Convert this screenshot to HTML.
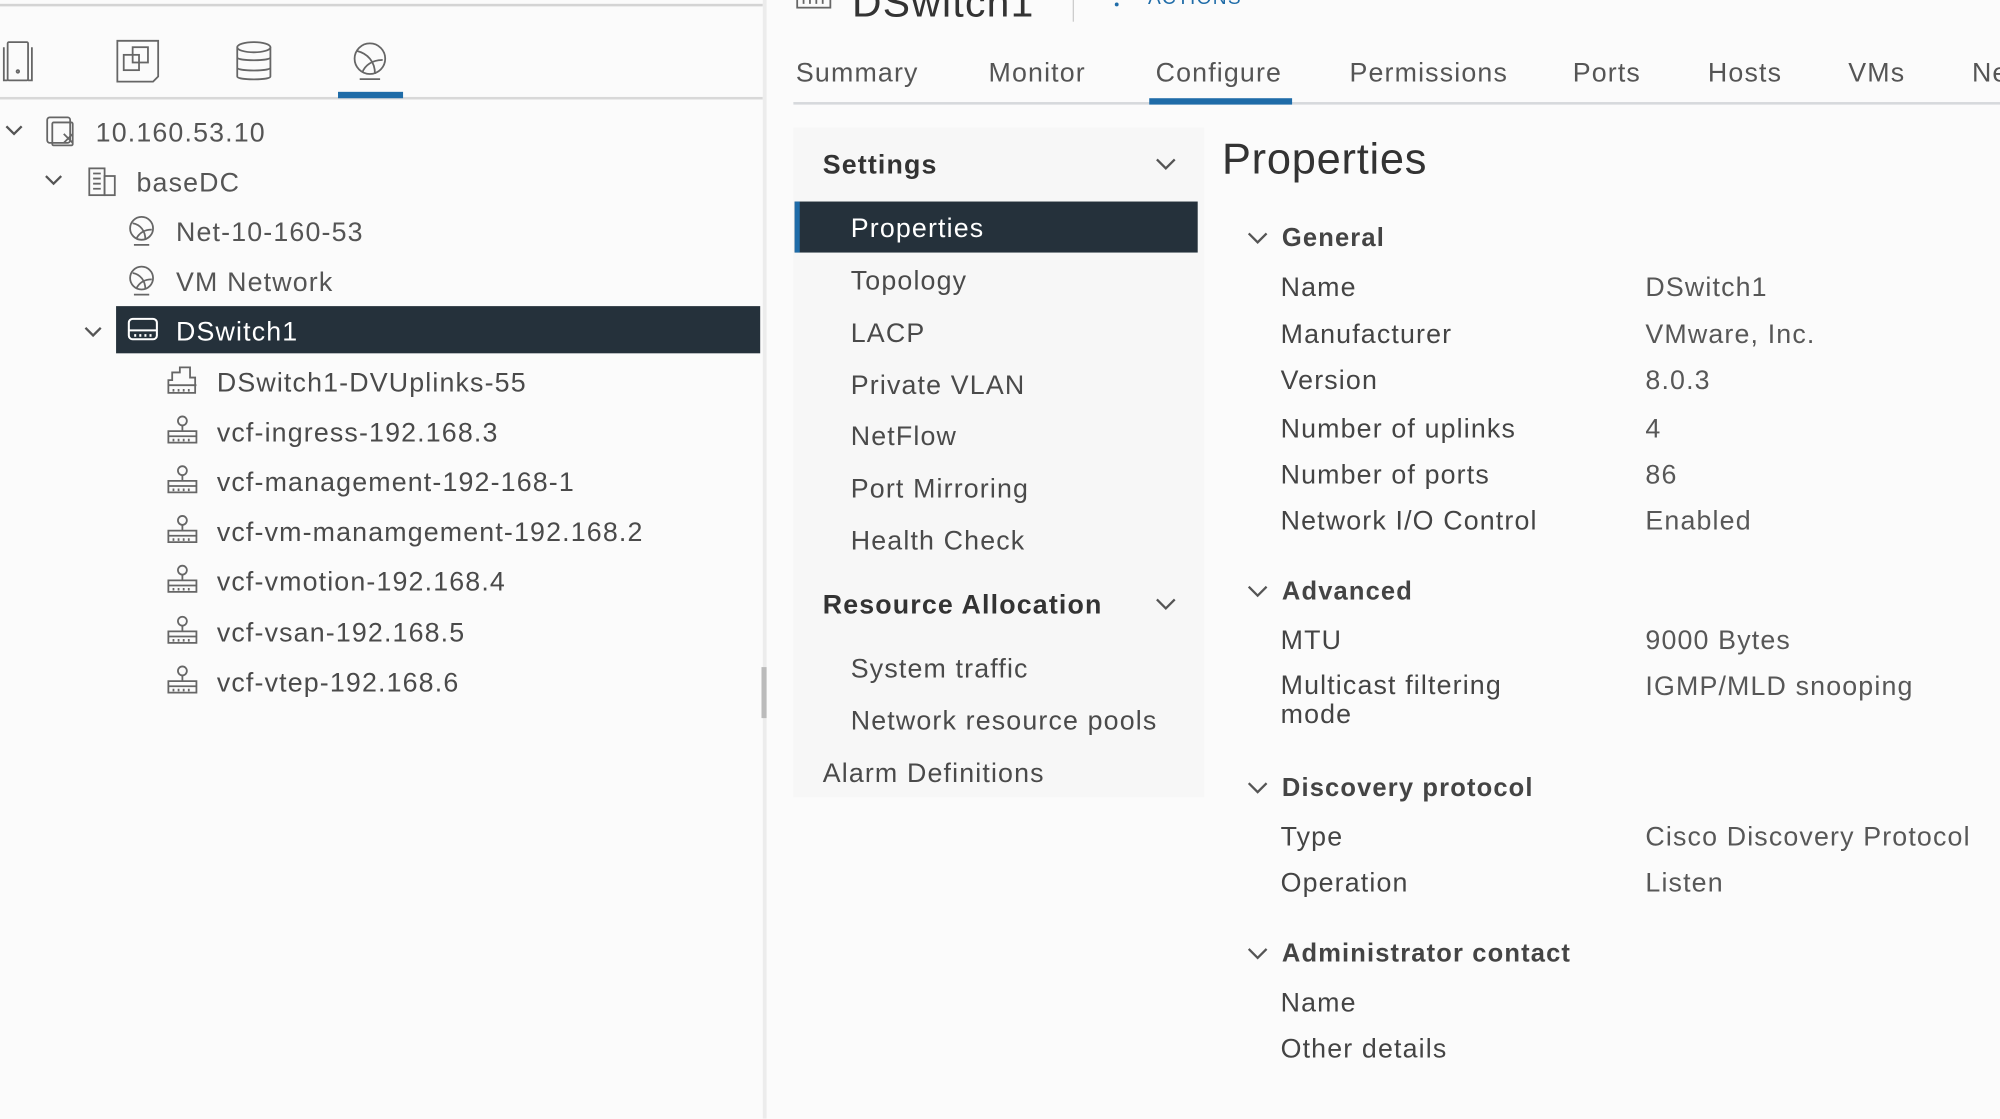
<!DOCTYPE html>
<html><head><meta charset="utf-8"><style>
html,body{margin:0;padding:0;width:2000px;height:1118px;overflow:hidden;background:#fbfbfb}
#s{position:absolute;left:0;top:0;width:1568px;height:877px;transform:scale(1.27551);transform-origin:0 0;font-family:"Liberation Sans",sans-serif;color:#4a4a4a}
.t{position:absolute;white-space:nowrap;line-height:26px;font-size:21px;letter-spacing:0.9px;margin-top:2px}
.b{font-weight:bold}
svg{position:absolute;overflow:visible}
.ic{stroke:#666;fill:none;stroke-width:1.4}
.ch{stroke:#555;fill:none;stroke-width:1.8}
</style></head><body><div id="s">
<!-- left panel -->
<div style="position:absolute;left:0;top:3px;width:598px;height:2px;background:#d4d4d4"></div>
<div style="position:absolute;left:0;top:76px;width:598px;height:2px;background:#d8d8d8"></div>
<div style="position:absolute;left:265px;top:72px;width:51px;height:5px;background:#1f6ca8"></div>
<div style="position:absolute;left:598px;top:0;width:3px;height:877px;background:#ececec"></div>
<div style="position:absolute;left:597px;top:523px;width:4px;height:40px;background:#bbb"></div>
<!-- top icons -->
<svg class="ic" style="left:0;top:30px" width="40" height="40" stroke-width="2"><rect x="6" y="3" width="16" height="30" rx="1"/><path d="M3 7v26h3M25 7v26h-3"/><circle cx="14" cy="26" r="1"/></svg>
<svg class="ic" style="left:90px;top:30px" width="40" height="40" stroke-width="2"><path d="M2 2h32v28l-4 4H2z"/><rect x="7" y="13" width="12" height="12"/><rect x="14" y="7" width="12" height="12"/></svg>
<svg class="ic" style="left:184px;top:30px" width="40" height="40" stroke-width="2"><ellipse cx="15" cy="7" rx="13" ry="4"/><path d="M2 7v23c0 3 26 3 26 0V7M2 15c0 3 26 3 26 0M2 23c0 3 26 3 26 0"/></svg>
<svg class="ic" style="left:274px;top:32px" width="40" height="40" stroke-width="2"><circle cx="16" cy="14" r="12"/><path d="M6 8c8 2 14 8 14 18M10 25c2-6 8-10 16-10M8 30h16"/></svg>
<!-- tree -->
<svg class="ch" style="left:4px;top:98px" width="14" height="10"><path d="M1 1l6 6 6-6"/></svg>
<svg class="ic" style="left:36px;top:91px" width="26" height="26"><rect x="1" y="1" width="18" height="20" rx="2"/><rect x="5" y="5" width="16" height="18" rx="1"/><path d="M14 14l7 7M21 14l-7 7"/></svg>
<div class="t" style="left:75px;top:90px;color:#555">10.160.53.10</div>
<svg class="ch" style="left:35px;top:137px" width="14" height="10"><path d="M1 1l6 6 6-6"/></svg>
<svg class="ic" style="left:69px;top:131px" width="24" height="24"><rect x="1" y="1" width="12" height="21"/><rect x="13" y="7" width="8" height="15"/><path d="M4 5h6M4 9h6M4 13h6M4 17h6"/></svg>
<div class="t" style="left:107px;top:129px;color:#555">baseDC</div>
<svg class="ic" style="left:100px;top:169px" width="24" height="26"><circle cx="11" cy="10" r="9"/><path d="M4 6c6 1 10 6 10 13M7 18c2-4 6-7 12-7M5 23h12"/></svg>
<div class="t" style="left:138px;top:168px;color:#555">Net-10-160-53</div>
<svg class="ic" style="left:100px;top:208px" width="24" height="26"><circle cx="11" cy="10" r="9"/><path d="M4 6c6 1 10 6 10 13M7 18c2-4 6-7 12-7M5 23h12"/></svg>
<div class="t" style="left:138px;top:207px;color:#555">VM Network</div>
<svg class="ch" style="left:66px;top:256px" width="14" height="10"><path d="M1 1l6 6 6-6"/></svg>
<div style="position:absolute;left:91px;top:240px;width:505px;height:37px;background:#25313b"></div>
<svg style="left:100px;top:249px" width="26" height="20" fill="none" stroke="#fff" stroke-width="1.6"><rect x="1" y="1" width="22" height="16" rx="3"/><path d="M1 10h22M6 13v2M10 13v2M14 13v2M18 13v2"/></svg>
<div class="t" style="left:138px;top:246px;color:#fff">DSwitch1</div>
<svg class="ic" style="left:131px;top:286px" width="26" height="26"><path d="M1 22V12h3V6h6V2h8v8h4v12z"/><path d="M1 16h22M5 19v2M9 19v2M13 19v2M17 19v2"/></svg>
<div class="t" style="left:170px;top:286px">DSwitch1-DVUplinks-55</div>
<svg class="ic" style="left:131px;top:325px" width="26" height="26"><circle cx="12" cy="5" r="3.5"/><path d="M12 9v4M1 22v-9h22v9zM1 17h22M5 19v2M9 19v2M13 19v2M17 19v2"/></svg>
<div class="t" style="left:170px;top:325px">vcf-ingress-192.168.3</div>
<svg class="ic" style="left:131px;top:364px" width="26" height="26"><circle cx="12" cy="5" r="3.5"/><path d="M12 9v4M1 22v-9h22v9zM1 17h22M5 19v2M9 19v2M13 19v2M17 19v2"/></svg>
<div class="t" style="left:170px;top:364px">vcf-management-192-168-1</div>
<svg class="ic" style="left:131px;top:403px" width="26" height="26"><circle cx="12" cy="5" r="3.5"/><path d="M12 9v4M1 22v-9h22v9zM1 17h22M5 19v2M9 19v2M13 19v2M17 19v2"/></svg>
<div class="t" style="left:170px;top:403px">vcf-vm-manamgement-192.168.2</div>
<svg class="ic" style="left:131px;top:442px" width="26" height="26"><circle cx="12" cy="5" r="3.5"/><path d="M12 9v4M1 22v-9h22v9zM1 17h22M5 19v2M9 19v2M13 19v2M17 19v2"/></svg>
<div class="t" style="left:170px;top:442px">vcf-vmotion-192.168.4</div>
<svg class="ic" style="left:131px;top:482px" width="26" height="26"><circle cx="12" cy="5" r="3.5"/><path d="M12 9v4M1 22v-9h22v9zM1 17h22M5 19v2M9 19v2M13 19v2M17 19v2"/></svg>
<div class="t" style="left:170px;top:482px">vcf-vsan-192.168.5</div>
<svg class="ic" style="left:131px;top:521px" width="26" height="26"><circle cx="12" cy="5" r="3.5"/><path d="M12 9v4M1 22v-9h22v9zM1 17h22M5 19v2M9 19v2M13 19v2M17 19v2"/></svg>
<div class="t" style="left:170px;top:521px">vcf-vtep-192.168.6</div>
<!-- right header -->
<svg class="ic" style="left:624px;top:-6px" width="30" height="16" stroke-width="2"><rect x="1" y="0" width="26" height="12"/><path d="M6 4v5M11 4v5M16 4v5M21 4v5"/></svg>
<div class="t" style="left:668px;top:-18px;font-size:32px;line-height:36px;color:#333;letter-spacing:1px">DSwitch1</div>
<div style="position:absolute;left:841px;top:0;width:1px;height:17px;background:#ccc"></div>
<div style="position:absolute;left:874px;top:2px;width:3px;height:3px;background:#1f6ca8;border-radius:2px"></div>
<div class="t" style="left:900px;top:-16px;font-size:15px;color:#1f6ca8;letter-spacing:1px">ACTIONS</div>
<!-- tabs -->
<div style="position:absolute;left:622px;top:80px;width:946px;height:2px;background:#d6d9dc"></div>
<div style="position:absolute;left:901px;top:77px;width:112px;height:5px;background:#1f6ca8"></div>
<div class="t" style="left:624px;top:43px;color:#555">Summary</div>
<div class="t" style="left:775px;top:43px;color:#555">Monitor</div>
<div class="t" style="left:906px;top:43px;color:#555">Configure</div>
<div class="t" style="left:1058px;top:43px;color:#555">Permissions</div>
<div class="t" style="left:1233px;top:43px;color:#555">Ports</div>
<div class="t" style="left:1339px;top:43px;color:#555">Hosts</div>
<div class="t" style="left:1449px;top:43px;color:#555">VMs</div>
<div class="t" style="left:1546px;top:43px;color:#555">Ne</div>
<!-- nav -->
<div style="position:absolute;left:622px;top:100px;width:322px;height:525px;background:#f7f7f7"></div>
<div class="t b" style="left:645px;top:115px;color:#333">Settings</div>
<svg class="ch" style="left:906px;top:124px" width="16" height="10"><path d="M1 1l7 7 7-7"/></svg>
<div style="position:absolute;left:623px;top:158px;width:316px;height:40px;background:#25313b;border-left:4px solid #1f6ca8;box-sizing:border-box"></div>
<div class="t" style="left:667px;top:165px;color:#fff">Properties</div>
<div class="t" style="left:667px;top:206px">Topology</div>
<div class="t" style="left:667px;top:247px">LACP</div>
<div class="t" style="left:667px;top:288px">Private VLAN</div>
<div class="t" style="left:667px;top:328px">NetFlow</div>
<div class="t" style="left:667px;top:369px">Port Mirroring</div>
<div class="t" style="left:667px;top:410px">Health Check</div>
<div class="t b" style="left:645px;top:460px;color:#333">Resource Allocation</div>
<svg class="ch" style="left:906px;top:469px" width="16" height="10"><path d="M1 1l7 7 7-7"/></svg>
<div class="t" style="left:667px;top:510px">System traffic</div>
<div class="t" style="left:667px;top:551px">Network resource pools</div>
<div class="t" style="left:645px;top:592px">Alarm Definitions</div>
<!-- properties -->
<div class="t" style="left:958px;top:103px;font-size:34px;line-height:40px;color:#333;letter-spacing:0.6px">Properties</div>
<svg class="ch" style="left:978px;top:182px" width="16" height="10"><path d="M1 1l7 7 7-7"/></svg>
<div class="t b" style="left:1005px;top:172px;font-size:20px;color:#444">General</div>
<div class="t" style="left:1004px;top:211px;color:#444">Name</div><div class="t" style="left:1290px;top:211px;color:#575757">DSwitch1</div>
<div class="t" style="left:1004px;top:248px;color:#444">Manufacturer</div><div class="t" style="left:1290px;top:248px;color:#575757">VMware, Inc.</div>
<div class="t" style="left:1004px;top:284px;color:#444">Version</div><div class="t" style="left:1290px;top:284px;color:#575757">8.0.3</div>
<div class="t" style="left:1004px;top:322px;color:#444">Number of uplinks</div><div class="t" style="left:1290px;top:322px;color:#575757">4</div>
<div class="t" style="left:1004px;top:358px;color:#444">Number of ports</div><div class="t" style="left:1290px;top:358px;color:#575757">86</div>
<div class="t" style="left:1004px;top:394px;color:#444">Network I/O Control</div><div class="t" style="left:1290px;top:394px;color:#575757">Enabled</div>
<svg class="ch" style="left:978px;top:459px" width="16" height="10"><path d="M1 1l7 7 7-7"/></svg>
<div class="t b" style="left:1005px;top:449px;font-size:20px;color:#444">Advanced</div>
<div class="t" style="left:1004px;top:488px;color:#444">MTU</div><div class="t" style="left:1290px;top:488px;color:#575757">9000 Bytes</div>
<div class="t" style="left:1004px;top:524px;color:#444;line-height:23px">Multicast filtering<br>mode</div><div class="t" style="left:1290px;top:524px;color:#575757">IGMP/MLD snooping</div>
<svg class="ch" style="left:978px;top:613px" width="16" height="10"><path d="M1 1l7 7 7-7"/></svg>
<div class="t b" style="left:1005px;top:603px;font-size:20px;color:#444">Discovery protocol</div>
<div class="t" style="left:1004px;top:642px;color:#444">Type</div><div class="t" style="left:1290px;top:642px;color:#575757">Cisco Discovery Protocol</div>
<div class="t" style="left:1004px;top:678px;color:#444">Operation</div><div class="t" style="left:1290px;top:678px;color:#575757">Listen</div>
<svg class="ch" style="left:978px;top:743px" width="16" height="10"><path d="M1 1l7 7 7-7"/></svg>
<div class="t b" style="left:1005px;top:733px;font-size:20px;color:#444">Administrator contact</div>
<div class="t" style="left:1004px;top:772px;color:#444">Name</div>
<div class="t" style="left:1004px;top:808px;color:#444">Other details</div>
</div></body></html>
